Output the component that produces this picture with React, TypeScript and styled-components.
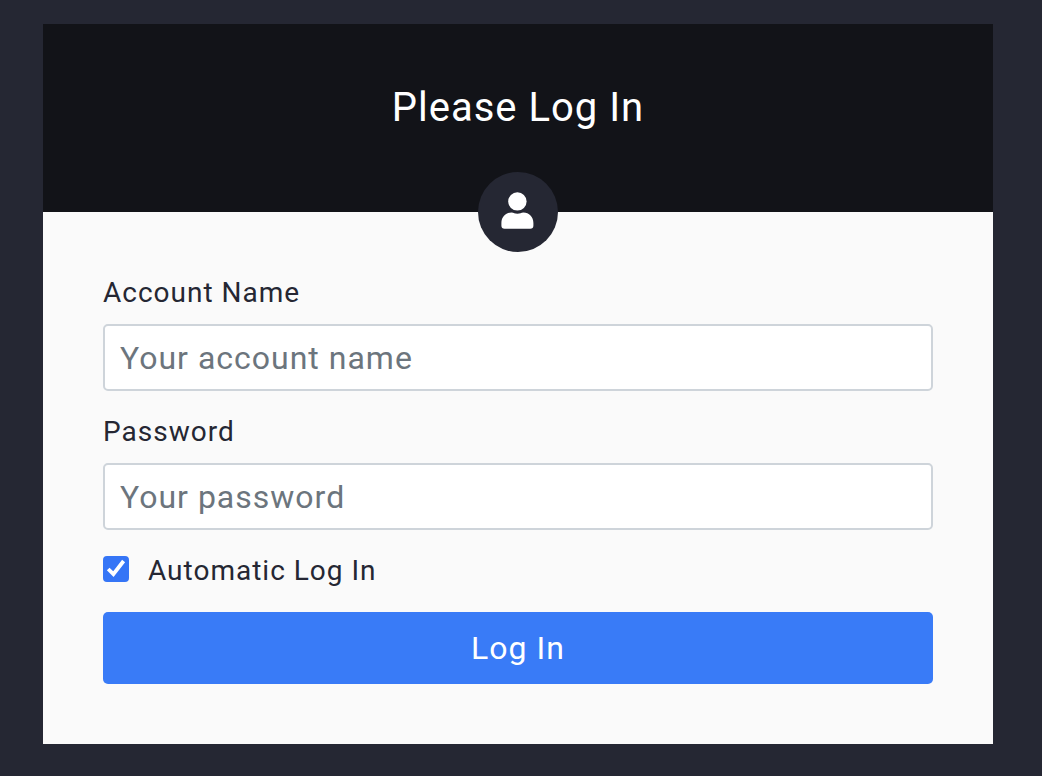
import React from "react";
import styled, { createGlobalStyle } from "styled-components";

const Global = createGlobalStyle`
  * { box-sizing: border-box; }
  body {
    margin: 0;
    background: #252733;
    color: #252733;
    font-family: Roboto, "Liberation Sans", sans-serif;
    font-size: 28px;
    letter-spacing: 1px;
  }
`;

const Page = styled.main`
  padding: 24px 49px 32px 43px;
`;

const Card = styled.section`
  background: #fafafa;
`;

const Header = styled.header`
  position: relative;
  display: flex;
  justify-content: center;
  padding: 60px 24px 80px;
  background: #121318;
  color: #fff;
`;

const Title = styled.h1`
  margin: 0;
  font-size: 40px;
  font-weight: 400;
  line-height: 48px;
`;

const Avatar = styled.span`
  position: absolute;
  left: 50%;
  bottom: -40px;
  width: 80px;
  height: 80px;
  margin-left: -40px;
  border-radius: 50%;
  background: #252733;
`;

const Form = styled.form`
  display: flex;
  flex-direction: column;
  padding: 60px;
`;

const Field = styled.div`
  display: flex;
  flex-direction: column;
  gap: 10px;
  margin-bottom: 20px;
`;

const Label = styled.label`
  line-height: 42px;
`;

const Input = styled.input`
  width: 100%;
  height: 67px;
  padding: 0 15px;
  border: 2px solid #ced4da;
  border-radius: 5px;
  background: #fff;
  color: #252733;
  font: inherit;
  font-size: 32px;
  letter-spacing: inherit;
  &::placeholder { color: #6c757d; opacity: 1; }
`;

const CheckRow = styled.label`
  display: flex;
  align-items: flex-start;
  gap: 19px;
  line-height: 42px;
  margin-bottom: 20px;
`;

const CheckWrap = styled.span`
  position: relative;
  display: flex;
  width: 26px;
  height: 26px;
  margin-top: 6px;
`;

const Checkbox = styled.input`
  appearance: none;
  width: 26px;
  height: 26px;
  margin: 0;
  border: 2px solid #ced4da;
  border-radius: 4px;
  background: #fff;
  &:checked { border-color: #3575f6; background: #3575f6; }
`;

const Tick = styled.svg`
  position: absolute;
  inset: 0;
  pointer-events: none;
`;

const Submit = styled.button`
  height: 72px;
  border: 0;
  border-radius: 5px;
  background: #397bf7;
  color: #fff;
  font: inherit;
  font-size: 32px;
  letter-spacing: inherit;
  cursor: pointer;
`;

export default function App() {
  return (
    <Page>
      <Global />
      <Card>
        <Header>
          <Title>Please Log In</Title>
          <Avatar>
            <svg width="80" height="80" viewBox="0 0 80 80" fill="#fff" aria-hidden="true">
              <circle cx="39.4" cy="29.4" r="9.2" />
              <path d="M23.400 51C23.400 45 27.800 40.500 33.500 40.500C36 40.500 36.500 41.800 39.400 41.800S42.800 40.500 45.500 40.500C51 40.500 55.400 45 55.400 51V53.500Q55.400 56.700 52.200 56.700H26.600Q23.400 56.700 23.400 53.500Z" />
            </svg>
          </Avatar>
        </Header>
        <Form onSubmit={(e) => e.preventDefault()}>
          <Field>
            <Label htmlFor="account">Account Name</Label>
            <Input id="account" type="text" placeholder="Your account name" />
          </Field>
          <Field>
            <Label htmlFor="password">Password</Label>
            <Input id="password" type="password" placeholder="Your password" />
          </Field>
          <CheckRow>
            <CheckWrap>
              <Checkbox type="checkbox" defaultChecked />
              <Tick width="26" height="26" viewBox="0 0 26 26" aria-hidden="true">
                <path d="M5.200 13L10.400 18.200L20.600 5" fill="none" stroke="#fff" strokeWidth="3.800" />
              </Tick>
            </CheckWrap>
            Automatic Log In
          </CheckRow>
          <Submit type="submit">Log In</Submit>
        </Form>
      </Card>
    </Page>
  );
}
